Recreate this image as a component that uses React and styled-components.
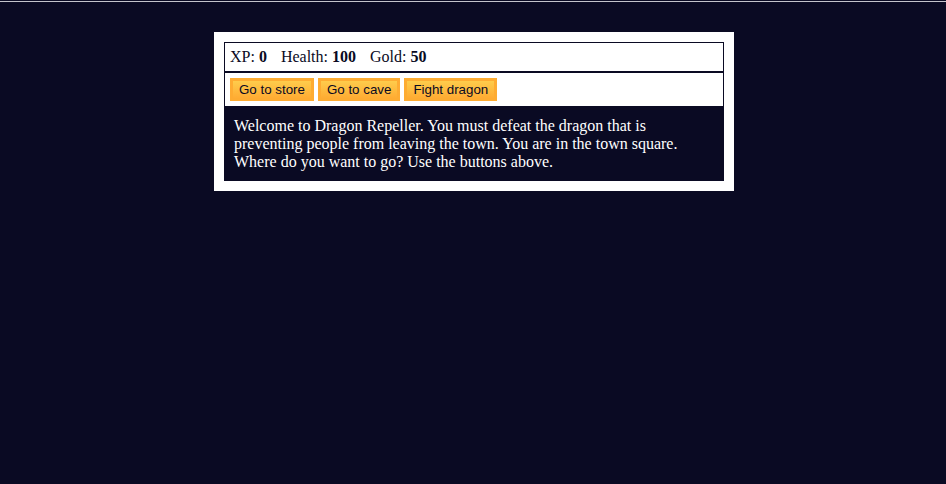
import React from 'react'
import styled, { createGlobalStyle } from 'styled-components'

const GlobalStyle = createGlobalStyle`
  html, body {
    margin: 0;
    background-color: #0a0a23;
  }
  body {
    padding-left: 2px;
    font-family: "Liberation Serif", "Times New Roman", serif;
    font-size: 16px;
  }
`

const TopLine = styled.div`
  height: 1px;
  margin: 1px 0 0 -2px;
  background: #c4c4cc;
`

const Game = styled.div`
  max-width: 500px;
  max-height: 400px;
  background-color: #ffffff;
  color: #ffffff;
  margin: 30px auto 0;
  padding: 10px;
`

const Box = styled.div`
  border: 1px solid #0a0a23;
  padding: 5px;
  color: #0a0a23;
  line-height: 18px;
`

const Controls = styled(Box)`
  display: flex;
  gap: 4px;
`

const Stat = styled.span`
  padding-right: 10px;
`

const Button = styled.button`
  cursor: pointer;
  font-family: "Liberation Sans", Arial, sans-serif;
  font-size: 13.333px;
  line-height: 15px;
  padding: 1px 6px;
  color: #0a0a23;
  background-color: #feac32;
  background-image: linear-gradient(#fecc4c, #ffac33);
  border: 3px solid #feac32;
`

const Text = styled.div`
  background-color: #0a0a23;
  color: #ffffff;
  padding: 10px;
  line-height: 18px;
`

const stats = [
  { label: 'XP', value: 0 },
  { label: 'Health', value: 100 },
  { label: 'Gold', value: 50 },
]

const buttons = ['Go to store', 'Go to cave', 'Fight dragon']

const App = () => {
  return (
    <>
      <GlobalStyle />
      <TopLine />
      <Game>
        <Box>
          {stats.map((s) => (
            <React.Fragment key={s.label}>
              <Stat>
                {s.label}: <strong>{s.value}</strong>
              </Stat>{' '}
            </React.Fragment>
          ))}
        </Box>
        <Controls>
          {buttons.map((b) => (
            <Button key={b}>{b}</Button>
          ))}
        </Controls>
        <Text>
          Welcome to Dragon Repeller. You must defeat the dragon that is preventing people from leaving
          the town. You are in the town square. Where do you want to go? Use the buttons above.
        </Text>
      </Game>
    </>
  )
}

export default App
